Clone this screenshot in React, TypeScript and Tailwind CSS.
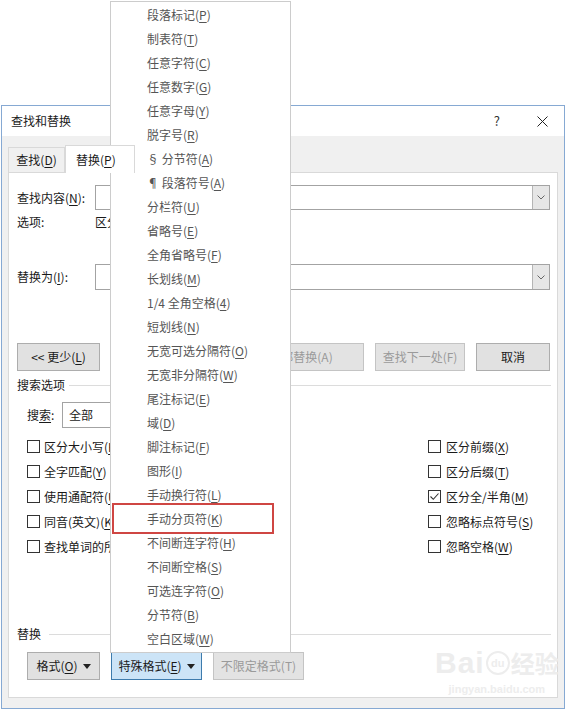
import React from "react";

const menuItems: [string, string][] = [
  ["段落标记", "P"],
  ["制表符", "T"],
  ["任意字符", "C"],
  ["任意数字", "G"],
  ["任意字母", "Y"],
  ["脱字号", "R"],
  ["§ 分节符", "A"],
  ["¶ 段落符号", "A"],
  ["分栏符", "U"],
  ["省略号", "E"],
  ["全角省略号", "F"],
  ["长划线", "M"],
  ["1/4 全角空格", "4"],
  ["短划线", "N"],
  ["无宽可选分隔符", "O"],
  ["无宽非分隔符", "W"],
  ["尾注标记", "E"],
  ["域", "D"],
  ["脚注标记", "F"],
  ["图形", "I"],
  ["手动换行符", "L"],
  ["手动分页符", "K"],
  ["不间断连字符", "H"],
  ["不间断空格", "S"],
  ["可选连字符", "O"],
  ["分节符", "B"],
  ["空白区域", "W"],
];

const leftChecks: [string, string][] = [
  ["区分大小写", "H"],
  ["全字匹配", "Y"],
  ["使用通配符", "U"],
  ["同音(英文)", "K"],
  ["查找单词的所有形式(英文)", "W"],
];

const rightChecks: [string, string, boolean][] = [
  ["区分前缀", "X", false],
  ["区分后缀", "T", false],
  ["区分全/半角", "M", true],
  ["忽略标点符号", "S", false],
  ["忽略空格", "W", false],
];

function Acc({ t, k }: { t: string; k: string }) {
  return (
    <>
      {t}(<span className="underline underline-offset-2">{k}</span>)
    </>
  );
}

function Combo({ h = "h-[25px]" }: { h?: string }) {
  return (
    <div className={`${h} w-[455px] border border-[#a3a3a3] bg-white flex justify-end`}>
      <div className="w-[17px] border-l border-[#b5b5b5] bg-[#e6e6e6] flex items-center justify-center">
        <svg width="8" height="5" viewBox="0 0 8 5">
          <path d="M0.5 0.5 L4 4 L7.5 0.5" fill="none" stroke="#666" strokeWidth="1" />
        </svg>
      </div>
    </div>
  );
}

function Btn({
  w,
  children,
  disabled,
  active,
}: {
  w: string;
  children: React.ReactNode;
  disabled?: boolean;
  active?: boolean;
}) {
  return (
    <div
      className={`${w} h-[28px] border flex items-center justify-center ${
        active
          ? "bg-[#cce4f7] border-[#3d7bad] text-[#1a1a1a]"
          : disabled
          ? "bg-[#e3e3e3] border-[#c4c4c4] text-[#9a9a9a]"
          : "bg-[#e1e1e1] border-[#adadad] text-[#1a1a1a]"
      }`}
    >
      {children}
    </div>
  );
}

function Caret() {
  return (
    <svg width="8" height="5" viewBox="0 0 8 5" className="ml-[5px]">
      <path d="M0 0 H8 L4 5 Z" fill="#222" />
    </svg>
  );
}

function CheckBox({ checked }: { checked?: boolean }) {
  return (
    <div className="shrink-0 w-[13px] h-[13px] border border-[#333] bg-white flex items-center justify-center">
      {checked && (
        <svg width="11" height="11" viewBox="0 0 11 11">
          <path d="M1.5 5.5 L4.3 8.3 L9.5 2.5" fill="none" stroke="#333" strokeWidth="1.1" />
        </svg>
      )}
    </div>
  );
}

export default function App() {
  return (
    <div className="relative w-[568px] h-[711px] overflow-hidden bg-white pt-[105px] pl-[1px] text-[12px] text-[#1a1a1a] font-['Microsoft_YaHei','Noto_Sans_CJK_SC',sans-serif]">
      {/* dialog */}
      <div className="w-[564px] h-[604px] border border-[#86a9d3] bg-[#f0f0f0] flex flex-col">
        <div className="h-[30px] bg-white flex items-center pl-[9px] pr-[16px]">
          <span>查找和替换</span>
          <span className="ml-auto text-[13px] text-[#333]">?</span>
          <svg width="11" height="11" viewBox="0 0 11 11" className="ml-[37px]">
            <path d="M0.5 0.5 L10.5 10.5 M10.5 0.5 L0.5 10.5" stroke="#222" strokeWidth="1" />
          </svg>
        </div>

        <div className="flex-1 px-[6px] pb-[10px] flex flex-col">
          <div className="h-[36px] flex items-end">
            <div className="h-[25px] w-[57px] border border-b-0 border-[#d9d9d9] bg-[#f0f0f0] flex items-center justify-center">
              <Acc t="查找" k="D" />
            </div>
            <div className="relative z-10 -mb-px h-[28px] w-[70px] border border-b-0 border-[#d9d9d9] bg-white flex items-center pl-[10px]">
              <Acc t="替换" k="P" />
            </div>
          </div>

          <div className="flex-1 border border-[#d9d9d9] bg-white flex flex-col pl-[8px] pr-[6px]">
            <div className="mt-[12px] flex items-center">
              <div className="w-[78px]">
                <Acc t="查找内容" k="N" />:
              </div>
              <Combo />
            </div>
            <div className="mt-[4px] h-[16px] flex items-center">
              <div className="w-[78px]">选项:</div>
              <div className="w-[15px] overflow-hidden whitespace-nowrap">区分全/半角</div>
            </div>
            <div className="mt-[34px] flex items-center">
              <div className="w-[78px]">
                <Acc t="替换为" k="I" />:
              </div>
              <Combo h="h-[26px]" />
            </div>

            <div className="mt-[53px] flex pr-[1px]">
              <Btn w="w-[83px]">
                {"<< "}
                <Acc t="更少" k="L" />
              </Btn>
              <div className="ml-auto flex gap-[11px]">
                <Btn w="w-[126px]" disabled>
                  全部替换(A)
                </Btn>
                <Btn w="w-[90px]" disabled>
                  查找下一处(F)
                </Btn>
                <Btn w="w-[74px]">取消</Btn>
              </div>
            </div>

            <div className="mt-[6px] h-[16px] flex items-center">
              <span>搜索选项</span>
              <div className="ml-[4px] flex-1 h-px bg-[#dcdcdc]" />
            </div>

            <div className="mt-[9px] pl-[10px] flex items-center">
              <div className="w-[35px]">
                搜<span className="underline underline-offset-2">索</span>:
              </div>
              <div className="h-[26px] w-[150px] border border-[#a3a3a3] flex items-center pl-[6px]">全部</div>
            </div>

            <div className="mt-[6px] pl-[10px] flex">
              <div className="w-[401px] flex flex-col">
                {leftChecks.map(([t, k]) => (
                  <div key={t} className="h-[25px] flex items-center gap-[4px]">
                    <CheckBox />
                    <span className="w-[66px] overflow-hidden whitespace-nowrap">
                      <Acc t={t} k={k} />
                    </span>
                  </div>
                ))}
              </div>
              <div className="flex flex-col">
                {rightChecks.map(([t, k, c]) => (
                  <div key={t} className="h-[25px] flex items-center gap-[5px]">
                    <CheckBox checked={c} />
                    <span>
                      <Acc t={t} k={k} />
                    </span>
                  </div>
                ))}
              </div>
            </div>

            <div className="mt-[67px] h-[16px] flex items-center">
              <span>替换</span>
              <div className="ml-[8px] flex-1 h-px bg-[#dcdcdc]" />
            </div>

            <div className="mt-[10px] pl-[10px] flex gap-[11px]">
              <Btn w="w-[73px]">
                <Acc t="格式" k="O" />
                <Caret />
              </Btn>
              <Btn w="w-[91px]" active>
                <Acc t="特殊格式" k="E" />
                <Caret />
              </Btn>
              <Btn w="w-[91px]" disabled>
                不限定格式(T)
              </Btn>
            </div>
          </div>
        </div>
      </div>

      {/* watermark */}
      <div className="absolute left-[435px] top-[648px] flex flex-col items-center text-[#ededed] font-['Liberation_Sans',sans-serif]">
        <div className="flex items-center leading-none">
          <span className="text-[30px] font-bold tracking-[1px]">Bai</span>
          <span className="mx-[1px] w-[24px] h-[24px] rounded-full border-2 border-[#ededed] text-[11px] font-bold flex items-center justify-center">
            du
          </span>
          <span className="text-[24px] font-bold font-['Noto_Sans_CJK_SC',sans-serif]">经验</span>
        </div>
        <span className="mt-[3px] text-[11px] font-bold">jingyan.baidu.com</span>
      </div>

      {/* special format menu */}
      <div className="absolute left-[110px] top-[1px] w-[181px] border border-[#cccccc] bg-white py-px text-[#555]">
        {menuItems.map(([t, k], i) => (
          <div key={i} className="h-[24px] flex items-center pl-[36px]">
            <span>
              <Acc t={t} k={k} />
            </span>
          </div>
        ))}
      </div>

      {/* highlight */}
      <div className="absolute left-[112px] top-[503px] w-[162px] h-[31px] border-2 border-[#cf4643]" />
    </div>
  );
}
